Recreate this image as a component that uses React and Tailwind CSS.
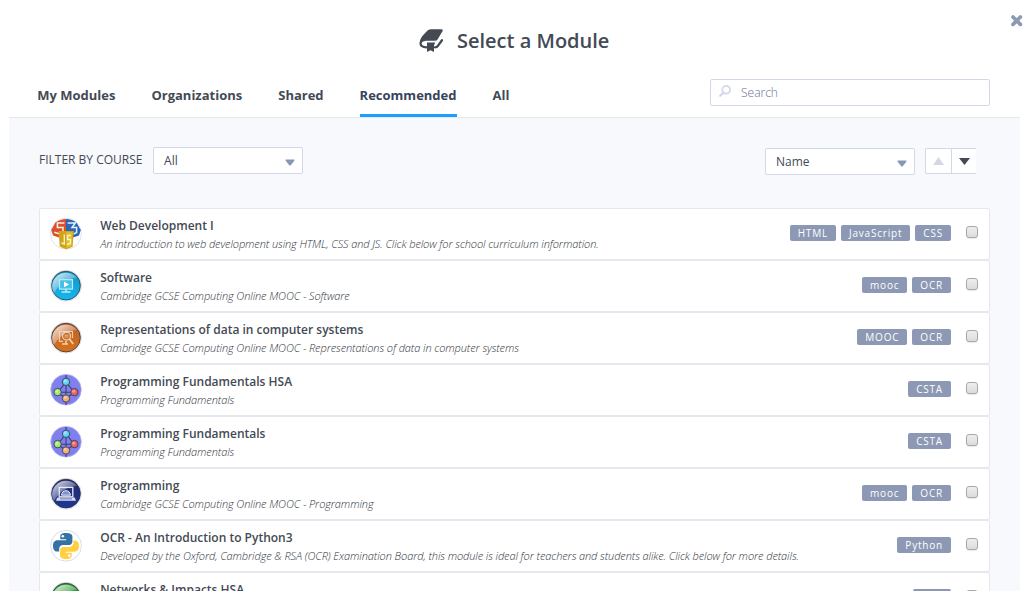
import React from "react";

const SANS = "font-['Open_Sans',sans-serif]";

function Gloss() {
  return (
    <path d="M2 16A14 14 0 0 1 27 8C19 8 10 13 4 23A14 14 0 0 1 2 16Z" fill="url(#gloss)" />
  );
}

function Orb({ fill, children }) {
  return (
    <svg viewBox="0 0 32 32" className="size-8 shrink-0">
      <circle cx="16" cy="15.7" r="15.5" fill="#fff" stroke="#d5dbe8" strokeWidth=".8" />
      <circle cx="16" cy="15.6" r="14.4" fill={fill} stroke="#1c2633" strokeWidth=".9" strokeOpacity=".8" />
      <Gloss />
      {children}
    </svg>
  );
}

function WebIcon() {
  return (
    <svg viewBox="0 0 32 32" className="size-8 shrink-0">
      <circle cx="16" cy="15.7" r="15.5" fill="#fff" stroke="#d5dbe8" strokeWidth=".8" />
      <path d="M5.5 4.5Q10 1.2 16 1V16L9 19.5 3 17.5 1.2 12Z" fill="#d9512c" />
      <path d="M16 1Q22 1.2 26.5 4.5L30.8 12 29 17.5 23 19.5 16 16Z" fill="#2a66b8" />
      <path d="M14.4 5H7.4V9.6H13V14.4L9 15.6 4.2 14.2" fill="none" stroke="#fff" strokeOpacity=".9" strokeWidth="1.5" />
      <path d="M17.6 5H25.4L22 9.6H26.6V14.6L23.4 16" fill="none" stroke="#fff" strokeOpacity=".9" strokeWidth="1.5" />
      <path d="M8.6 13H23.8L22.6 28.8 16.2 31.2 9.8 28.8Z" fill="#cfa515" />
      <path d="M16.2 14.2H22.6L21.5 28 16.2 30Z" fill="#e5bf25" />
      <path d="M14.3 16.5V26L11.5 25M20.8 17.5H17.6V21.5H20.4V25.5L17 26.5" fill="none" stroke="#fff" strokeOpacity=".8" strokeWidth="1.4" />
    </svg>
  );
}

function SoftwareIcon() {
  return (
    <Orb fill="url(#cyan)">
      <g fill="none" stroke="#b9ebfc">
        <rect x="9.5" y="9.7" width="13" height="9.4" strokeWidth="1.2" fill="#46bfe8" />
        <path d="M16 19V21.4M11.5 22H20.5" strokeWidth="1.6" />
      </g>
      <path d="M14 11.5 19 14.4 14 17.2Z" fill="#fff" />
    </Orb>
  );
}

function DataIcon() {
  return (
    <Orb fill="url(#orange)">
      <g fill="none" stroke="#f3d7c2" strokeOpacity=".9">
        <path d="M13 19.3H9.5V9.5H22.5V16" strokeWidth="1.2" />
        <path d="M16 19V21.5M12 22H18" strokeWidth="1.5" />
        <circle cx="16.5" cy="14" r="4" strokeWidth="1.3" />
        <path d="M14.5 13.2H18.5M14.5 15H18.5" strokeWidth=".9" />
        <path d="M19.4 17 23.2 22" strokeWidth="1.9" />
      </g>
    </Orb>
  );
}

function GraphIcon() {
  return (
    <svg viewBox="0 0 32 32" className="size-8 shrink-0">
      <circle cx="16" cy="15.7" r="15.3" fill="#7f7fee" stroke="#b5b5ef" strokeWidth=".8" />
      <path d="M16 1V31M7.6 18.3H24.4M16 8 7.6 18.3 16 24.5 24.4 18.3Z" fill="none" stroke="#3d3c70" strokeWidth="1.1" />
      <g stroke="#3b4b60" strokeWidth="1">
        <circle cx="16" cy="7.8" r="3.7" fill="#62d5f6" />
        <circle cx="7.6" cy="18.1" r="3.7" fill="#a3ea68" />
        <circle cx="24.4" cy="18.1" r="3.7" fill="#f26060" />
        <circle cx="16" cy="24.5" r="3.7" fill="#f5aa78" />
      </g>
      <g fill="#fff" fillOpacity=".4">
        <circle cx="15.3" cy="7" r="1.4" />
        <circle cx="6.9" cy="17.3" r="1.4" />
        <circle cx="23.7" cy="17.3" r="1.4" />
        <circle cx="15.3" cy="23.5" r="1.4" />
      </g>
    </svg>
  );
}

function LaptopIcon() {
  return (
    <Orb fill="url(#navy)">
      <g fill="none" stroke="#e7eaf8">
        <rect x="9.2" y="9.4" width="13.6" height="9.4" strokeWidth="1.3" />
        <path d="M11.5 17.2C11.8 11.2 20.2 11.2 20.5 17.2Z" strokeWidth="1" fill="#8190c8" />
      </g>
      <path d="M7.3 19.5H24.7L26 22.7H6Z" fill="#dce1f3" />
      <path d="M10 20.9H22" stroke="#4357a3" strokeWidth=".8" />
    </Orb>
  );
}

function PythonIcon() {
  return (
    <svg viewBox="0 0 32 32" className="size-8 shrink-0">
      <circle cx="16" cy="15.7" r="15.4" fill="#fff" stroke="#d3dae9" strokeWidth=".9" />
      <path d="M15.7 3C11.8 3 10.3 4.3 10.3 6.5V9.2H16.2V10.2H7.4C4.6 10.2 3 12.4 3 15.9C3 19.4 4.7 21.5 7 21.5H9.2V18.7C9.2 16.5 11 14.9 13.2 14.9H19.1C21 14.9 22.4 13.4 22.4 11.5V6.5C22.4 4.3 20.2 3 15.7 3Z" fill="#3672a4" />
      <path d="M16.3 28.9C20.2 28.9 21.7 27.6 21.7 25.4V22.7H15.8V21.7H24.6C27.4 21.7 29 19.5 29 16C29 12.5 27.3 10.4 25 10.4H23.4V13C23.4 15.2 21.5 17 19.3 17H13.4C11.5 17 10.1 18.5 10.1 20.4V25.4C10.1 27.6 12 28.9 16.3 28.9Z" fill="#ffd040" />
      <circle cx="12.8" cy="6.2" r="1.3" fill="#fff" />
      <circle cx="19.2" cy="25.6" r="1.3" fill="#fff" />
    </svg>
  );
}

function NetworkIcon() {
  return (
    <Orb fill="url(#green)">
      <path d="M11 11H21V18H11Z" fill="none" stroke="#e5ffe5" />
    </Orb>
  );
}

const MODULES = [
  { icon: WebIcon, title: "Web Development I", text: "An introduction to web development using HTML, CSS and JS. Click below for school curriculum information.", tags: ["HTML", "JavaScript", "CSS"] },
  { icon: SoftwareIcon, title: "Software", text: "Cambridge GCSE Computing Online MOOC - Software", tags: ["mooc", "OCR"] },
  { icon: DataIcon, title: "Representations of data in computer systems", text: "Cambridge GCSE Computing Online MOOC - Representations of data in computer systems", tags: ["MOOC", "OCR"] },
  { icon: GraphIcon, title: "Programming Fundamentals HSA", text: "Programming Fundamentals", tags: ["CSTA"] },
  { icon: GraphIcon, title: "Programming Fundamentals", text: "Programming Fundamentals", tags: ["CSTA"] },
  { icon: LaptopIcon, title: "Programming", text: "Cambridge GCSE Computing Online MOOC - Programming", tags: ["mooc", "OCR"] },
  { icon: PythonIcon, title: "OCR - An Introduction to Python3", text: "Developed by the Oxford, Cambridge & RSA (OCR) Examination Board, this module is ideal for teachers and students alike. Click below for more details.", tags: ["Python"] },
  { icon: NetworkIcon, title: "Networks & Impacts HSA", text: "", tags: ["HSA"] },
];

const TABS = ["My Modules", "Organizations", "Shared", "Recommended", "All"];

function Gradients() {
  return (
    <svg className="absolute size-0" aria-hidden="true">
      <defs>
        <linearGradient id="gloss" x1="0" y1="0" x2=".7" y2=".8">
          <stop offset="0" stopColor="#fff" stopOpacity=".9" />
          <stop offset="1" stopColor="#fff" stopOpacity=".08" />
        </linearGradient>
        <linearGradient id="cyan" x1="0" y1="0" x2="0" y2="1">
          <stop offset="0" stopColor="#168fbe" />
          <stop offset="1" stopColor="#12b9f0" />
        </linearGradient>
        <linearGradient id="orange" x1="0" y1="0" x2="0" y2="1">
          <stop offset="0" stopColor="#b86225" />
          <stop offset="1" stopColor="#d8711c" />
        </linearGradient>
        <linearGradient id="navy" x1="0" y1="0" x2="0" y2="1">
          <stop offset="0" stopColor="#252b68" />
          <stop offset="1" stopColor="#1c3596" />
        </linearGradient>
        <linearGradient id="green" x1="0" y1="0" x2="0" y2="1">
          <stop offset="0" stopColor="#2b9430" />
          <stop offset="1" stopColor="#31b336" />
        </linearGradient>
      </defs>
    </svg>
  );
}

function Select({ value }) {
  return (
    <button className="flex h-[27px] w-[150px] items-center justify-between rounded-[2px] border border-[#d3d8e8] bg-white pr-[7px] pl-[10px] text-[12px] text-[#434a54]">
      <span>{value}</span>
      <svg viewBox="0 0 10 7" className="mt-[3px] h-[7px] w-[10px]">
        <path d="M.8 .5H9.2Q9.8 1 9.3 1.8L5.8 6.2Q5 7 4.2 6.2L.7 1.8Q.2 1 .8 .5Z" fill="#8a97b4" />
      </svg>
    </button>
  );
}

function Row({ icon: Icon, title, text, tags }) {
  return (
    <li className="flex h-[52px] items-center rounded-[2px] border border-[#e6e8ef] bg-white pr-[11px] pl-[10px]">
      <Icon />
      <div className="ml-[18px] h-9 min-w-0 flex-1 pt-px pl-[0.2px] whitespace-nowrap">
        <h3 className="text-[12px] leading-[18px] font-semibold text-[#434a54]">{title}</h3>
        <p className="text-[11px] leading-[18px] font-light tracking-[-0.1px] text-[#30353d] italic">{text}</p>
      </div>
      <div className="mt-[-2px] flex gap-[5px]">
        {tags.map((tag) => (
          <span key={tag} className="h-4 rounded-[2px] bg-[#8c98b4] px-2 text-[10px] leading-[17px] font-medium tracking-[0.8px] text-white">{tag}</span>
        ))}
      </div>
      <span className="mt-[-4px] ml-[15px] h-3 w-3 rounded-[3px] border border-[#a8a8a8] bg-linear-to-b from-[#eeeeee] to-[#dcdcdc] shadow-[0_1px_1px_#00000018]" />
    </li>
  );
}

export default function App() {
  return (
    <div className={`${SANS} h-[591px] w-[1030px] overflow-hidden bg-white pr-[10px] pl-[9px] text-[#434a54]`}>
      <Gradients />
      <header className="flex h-[117px] flex-col">
        <div className="flex h-[73px] shrink-0 items-start">
          <div className="flex flex-1 items-center pt-[27px] pl-[410px]">
            <svg viewBox="0 0 26 24" className="h-6 w-[26px]">
              <path d="M8.5 1.5Q10.5 .3 12 .3H22.5Q24.5 .3 23.6 2L18.7 10.2Q17.7 11.8 15.8 11.8H7Q3.6 12.2 1.8 14.3Q.6 10.5 3.4 7Z" fill="#434a54" />
              <path d="M4.5 8.5Q1.4 11.5 1.5 14.5Q1.8 18.2 7.5 18.3M16 18.3Q18 18.3 18.9 16.8L23 11.2" fill="none" stroke="#434a54" strokeWidth="2.3" strokeLinecap="round" />
              <path d="M8 13.6H16.2L15 16.5V23L11.5 21.2 8 23Z" fill="#434a54" />
            </svg>
            <h1 className="ml-[12px] text-[20px] leading-[28px] font-semibold">Select a Module</h1>
          </div>
          <svg viewBox="0 0 13 13" className="mt-[14px] mr-[-3px] size-[13px]">
            <path d="M3 3 10.4 10.4M10.4 3 3 10.4" stroke="#8c98b4" strokeWidth="3.7" strokeLinecap="round" />
          </svg>
        </div>
        <div className="flex h-11 justify-between pr-[30px] pl-7">
          <nav className="flex gap-9 pl-[0.2px]">
            {TABS.map((tab) => (
              <a key={tab} className={`h-11 border-b-3 pt-[12px] text-[13px] leading-[20px] font-bold ${tab === "Recommended" ? "border-[#1a9fff] text-[#36435c]" : "border-transparent"}`}>{tab}</a>
            ))}
          </nav>
          <div className="mt-[6px] flex h-[27px] w-[280px] items-center rounded-[2px] border border-[#d3d8e8] pl-[8px]">
            <svg viewBox="0 0 12 12" className="mt-[-3px] size-3 text-[#d3d8e8]">
              <circle cx="7.2" cy="4.8" r="3.9" fill="none" stroke="currentColor" strokeWidth="1.8" />
              <path d="M4.3 7.7 1.2 10.8" stroke="currentColor" strokeWidth="2.2" strokeLinecap="round" />
            </svg>
            <span className="ml-[10px] text-[12px] font-light text-[#63708f]">Search</span>
          </div>
        </div>
      </header>
      <main className="h-[474px] border-t border-[#e6e8ee] bg-[#f8f9fd] px-[30px] pt-[29px]">
        <div className="flex h-[61px] items-start">
          <span className="mr-[10.6px] text-[12px] leading-[25px]">FILTER BY COURSE</span>
          <Select value="All" />
          <div className="mt-px mr-[14px] ml-auto flex gap-[10px]">
            <Select value="Name" />
            <div className="flex h-[26px] w-[51px] overflow-hidden rounded-l-[2px] border border-r-0 border-[#d3d8e8] bg-white">
              <span className="flex w-[26px] items-center justify-center border-r border-[#d3d8e8]">
                <svg viewBox="0 0 11 8" className="h-2 w-[11px]"><path d="M5.5 0 11 8H0Z" fill="#d3d8e8" /></svg>
              </span>
              <span className="flex flex-1 items-center justify-center pt-px">
                <svg viewBox="0 0 11 7" className="h-[7px] w-[11px]"><path d="M0 0H11L5.5 7Z" fill="#434a54" /></svg>
              </span>
            </div>
          </div>
        </div>
        <ul className="w-[951px]">
          {MODULES.map((item) => (
            <Row key={item.title} {...item} />
          ))}
        </ul>
      </main>
    </div>
  );
}
